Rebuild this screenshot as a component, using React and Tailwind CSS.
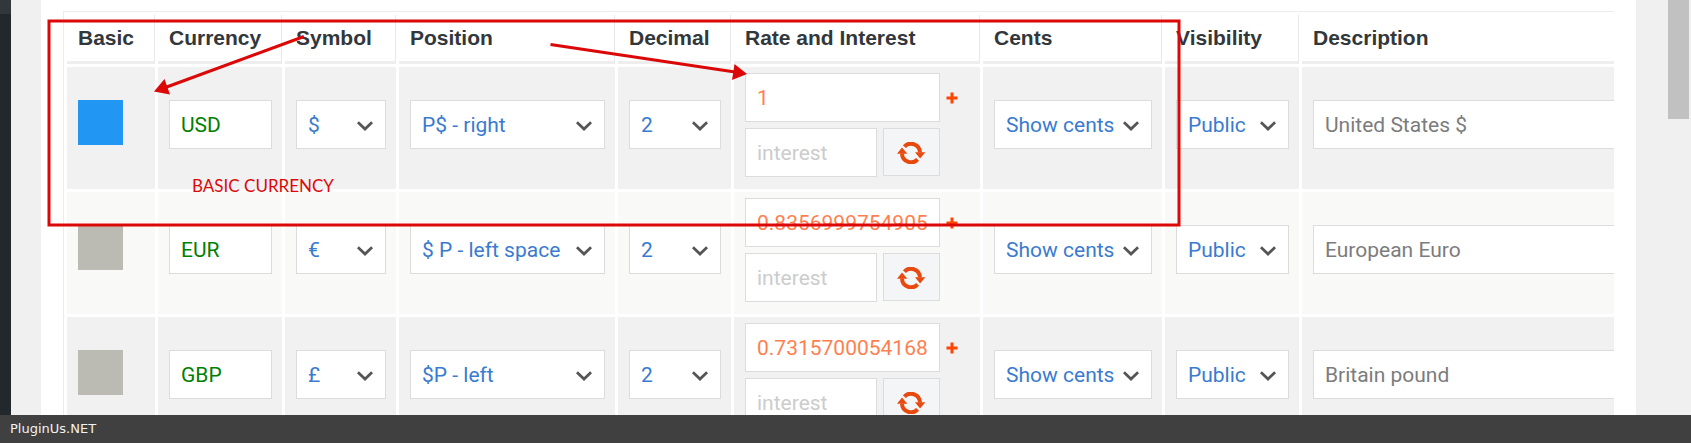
import React, { useState } from 'react';

const COLUMNS = [
  { label: 'Basic', width: 'w-[88px]' },
  { label: 'Currency', width: 'w-[124px]' },
  { label: 'Symbol', width: 'w-[111px]' },
  { label: 'Position', width: 'w-[216px]' },
  { label: 'Decimal', width: 'w-[113px]' },
  { label: 'Rate and Interest', width: 'w-[246px]' },
  { label: 'Cents', width: 'w-[179px]' },
  { label: 'Visibility', width: 'w-[134px]' },
  { label: 'Description', width: 'w-[500px]' }
];

const SYMBOLS = ['$', '€', '£'];
const POSITIONS = ['P$ - right', '$ P - left space', '$P - left', 'P $ - right space'];
const DECIMALS = ['0', '1', '2', '3', '4'];
const CENTS = ['Show cents', 'Hide cents'];
const VISIBILITY = ['Public', 'Private'];

const INITIAL_CURRENCIES = [
  { code: 'USD', symbol: '$', position: 'P$ - right', decimals: '2', rate: '1', cents: 'Show cents', visibility: 'Public', description: 'United States $' },
  { code: 'EUR', symbol: '€', position: '$ P - left space', decimals: '2', rate: '0.8356999754905', cents: 'Show cents', visibility: 'Public', description: 'European Euro' },
  { code: 'GBP', symbol: '£', position: '$P - left', decimals: '2', rate: '0.7315700054168', cents: 'Show cents', visibility: 'Public', description: 'Britain pound' }
];

const FIELD = 'block h-[49px] border border-[#dcdcdc] bg-white px-[11px] text-[21px] leading-6 outline-none';

function SelectField({ label, options, value, onChange }) {
  return (
    <div className="relative mb-2">
      <select
        aria-label={label}
        value={value}
        onChange={onChange}
        className={`${FIELD} w-full appearance-none pt-0.5 text-[#3a7bd0]`}
      >
        {options.map((option) => <option key={option}>{option}</option>)}
      </select>
      <svg viewBox="0 0 16 10" className="pointer-events-none absolute right-[13px] top-[21px] h-[10px] w-4">
        <path d="M0.900 1.200L8 8l7.100-6.800" fill="none" stroke="#555" strokeWidth="2.800" />
      </svg>
    </div>
  );
}

function RefreshIcon() {
  return (
    <svg viewBox="0 0 29 22" className="h-[22px] w-[29px]" fill="none">
      <path d="M7.400 4.600A9 9 0 0 1 23 10.500" stroke="#e8490f" strokeWidth="4" />
      <path d="M20.600 17.400A9 9 0 0 1 5 11.500" stroke="#e8490f" strokeWidth="4" />
      <path d="M18 10.200h10.400l-5.300 6.200z" fill="#e8490f" />
      <path d="M0 11.800h10.400L5 5.400z" fill="#e8490f" />
    </svg>
  );
}

function CurrencyRow({ currency, isBasic, onSelectBasic, onChange }) {
  const { code } = currency;
  const set = (field) => (event) => onChange(field, event.target.value);

  return (
    <tr className="odd:bg-[#f1f1f1] even:bg-[#f9f9f7]">
      <td className="px-[11px] py-1.5">
        <div className="h-14">
          <input
            type="radio"
            name="basic-currency"
            aria-label={`${code} is the basic currency`}
            checked={isBasic}
            onChange={onSelectBasic}
            className="block size-[45px] appearance-none bg-[#bbbbb3] checked:bg-[#2196f3]"
          />
        </div>
      </td>
      <td className="px-[11px] py-1.5">
        <input
          aria-label="Currency code"
          value={code}
          onChange={set('code')}
          className={`${FIELD} mb-2 w-[103px] pt-0.5 text-[#008000]`}
        />
      </td>
      <td className="pl-[11px] pr-2.5 py-1.5">
        <SelectField label={`${code} symbol`} options={SYMBOLS} value={currency.symbol} onChange={set('symbol')} />
      </td>
      <td className="pl-[11px] pr-2.5 py-1.5">
        <SelectField label={`${code} position`} options={POSITIONS} value={currency.position} onChange={set('position')} />
      </td>
      <td className="pl-[11px] pr-2.5 py-1.5">
        <SelectField label={`${code} decimals`} options={DECIMALS} value={currency.decimals} onChange={set('decimals')} />
      </td>
      <td className="px-[11px] py-1.5">
        <div className="mb-1.5 flex items-center gap-1.5">
          <input
            aria-label={`${code} rate`}
            value={currency.rate}
            onChange={set('rate')}
            className={`${FIELD} w-[195px] text-[#ff7f50]`}
          />
          <button type="button" aria-label={`Add ${code} interest`} className="flex">
            <svg viewBox="0 0 12 12" className="size-3">
              <path d="M0.500 6h11M6 0.500v11" stroke="#ff4500" strokeWidth="3" />
            </svg>
          </button>
        </div>
        <div className="mb-1.5 flex items-start gap-1.5">
          <input
            aria-label={`${code} interest`}
            placeholder="interest"
            className={`${FIELD} w-[132px] placeholder:text-[#cccccc]`}
          />
          <button
            type="button"
            aria-label={`Refresh ${code} rate`}
            className="flex h-12 w-[57px] items-center justify-center border border-[#dcdcdc] bg-[#f3f5f6] pt-0.5"
          >
            <RefreshIcon />
          </button>
        </div>
      </td>
      <td className="pl-[11px] pr-2.5 py-1.5">
        <SelectField label={`${code} cents`} options={CENTS} value={currency.cents} onChange={set('cents')} />
      </td>
      <td className="pl-[11px] pr-2.5 py-1.5">
        <SelectField label={`${code} visibility`} options={VISIBILITY} value={currency.visibility} onChange={set('visibility')} />
      </td>
      <td className="px-[11px] py-1.5">
        <input
          aria-label={`${code} description`}
          value={currency.description}
          onChange={set('description')}
          className={`${FIELD} mb-2 w-full pt-0.5 text-[#7c7c7c]`}
        />
      </td>
    </tr>
  );
}

// Red frame, arrows and caption drawn over the table
function Annotations() {
  return (
    <div className="pointer-events-none absolute left-0 top-0">
      <svg width="1200" height="240" fill="none" stroke="#dc0808" strokeWidth="3">
        <rect x="49" y="21" width="1130" height="204" />
        <path d="M304 36.500L164 88" />
        <path d="M154 91.500l10.500-12.500 5.500 15.500z" fill="#dc0808" stroke="none" />
        <path d="M550.500 44.500L735 72" />
        <path d="M747 74l-12.500-10-2.500 16z" fill="#dc0808" stroke="none" />
      </svg>
      <p className="absolute left-48 top-[174px] whitespace-nowrap font-['Lato',sans-serif] text-[17px] leading-6 text-[#dc0808]">
        BASIC CURRENCY
      </p>
    </div>
  );
}

export default function App() {
  const [currencies, setCurrencies] = useState(INITIAL_CURRENCIES);
  const [basicIndex, setBasicIndex] = useState(0);

  function updateCurrency(index, field, value) {
    setCurrencies((list) => list.map((item, i) => (i === index ? { ...item, [field]: value } : item)));
  }

  return (
    <div className="relative flex h-screen flex-col overflow-hidden bg-[#f0f0f0] font-['Roboto',sans-serif]">
      <div className="flex min-h-0 flex-1">
        <aside className="w-[11px] shrink-0 bg-[#23282d]">
          <div className="h-3.5 bg-[#32373c]" />
        </aside>

        <main className="ml-[30px] mr-8 min-w-0 flex-1 overflow-hidden bg-white px-[22px] pt-[11px]">
          <div className="overflow-hidden border-l border-t border-[#ececec]">
            <table className="w-full min-w-[1741px] table-fixed border-separate border-spacing-[3px]">
              <thead>
                <tr>
                  {COLUMNS.map((column) => (
                    <th
                      key={column.label}
                      className={`${column.width} h-[49px] border-b-[3px] border-r border-b-[#eeeeee] border-r-[#e8e8e8] pl-[11px] text-left font-['Liberation_Sans',sans-serif] text-[21px] font-bold leading-6 text-[#32373c]`}
                    >
                      {column.label}
                    </th>
                  ))}
                </tr>
              </thead>
              <tbody>
                {currencies.map((currency, index) => (
                  <CurrencyRow
                    key={index}
                    currency={currency}
                    isBasic={index === basicIndex}
                    onSelectBasic={() => setBasicIndex(index)}
                    onChange={(field, value) => updateCurrency(index, field, value)}
                  />
                ))}
              </tbody>
            </table>
          </div>
        </main>

        <div className="w-[23px] shrink-0 pr-0.5">
          <div className="h-[119px] bg-[#c1c1c1]" />
        </div>
      </div>

      <footer className="h-7 shrink-0 bg-[#404040] px-2.5 font-['DejaVu_Sans',sans-serif] text-[13px] leading-7 text-[#f2f2f2]">
        PluginUs.NET
      </footer>

      <Annotations />
    </div>
  );
}
